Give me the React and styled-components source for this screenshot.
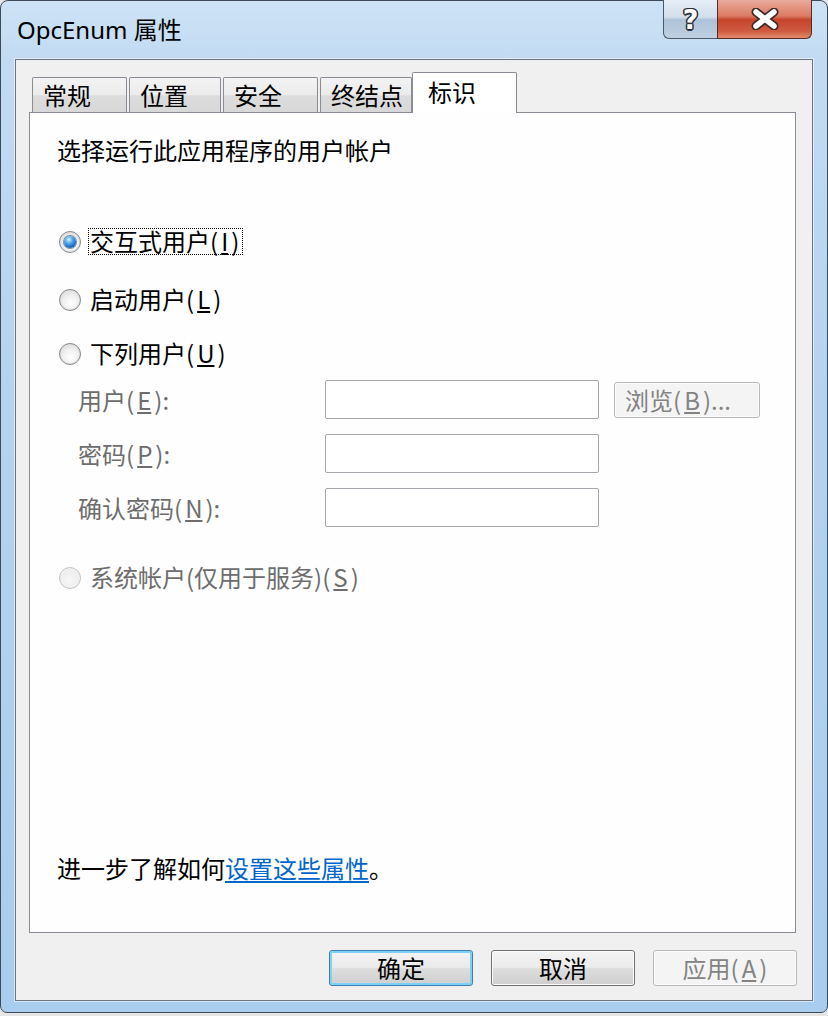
import React from 'react';
import styled, { createGlobalStyle } from 'styled-components';

const cjk = `"Noto Sans CJK SC", "Noto Sans", sans-serif`;

const Global = createGlobalStyle`
  html, body {
    margin: 0;
    padding: 0;
    background: #e6e6e6;
  }
  #root {
    width: 828px;
    height: 1016px;
  }
  * { box-sizing: border-box; }
`;

const Window = styled.div`
  width: 828px;
  height: 1013px;
  display: flex;
  flex-direction: column;
  padding: 0 14px 11px 14px;
  border: 1px solid #3d4a57;
  border-radius: 8px 8px 7px 7px;
  background: linear-gradient(180deg, #cde2f5 0px, #c2dbf2 60px, #b4d3ef 400px, #a9cdee 100%);
  font-family: ${cjk};
`;

const TitleBar = styled.div`
  height: 58px;
  display: flex;
  align-items: flex-start;
  justify-content: space-between;
  flex-shrink: 0;
`;

const Title = styled.div`
  margin: 14px 0 0 2px;
  font-family: "Noto Sans", "Noto Sans CJK SC", sans-serif;
  font-size: 24px;
  line-height: 30px;
  color: #000;
`;

const Caption = styled.div`
  display: flex;
  margin-right: 1px;
  margin-top: -1px;
`;

const HelpBtn = styled.div`
  width: 54px;
  height: 39px;
  border: 1px solid #4a5868;
  border-top: none;
  border-right: none;
  border-radius: 0 0 0 6px;
  background: linear-gradient(180deg, #e6eef7 0%, #d2dfec 45%, #aec2d7 52%, #bfd0e2 100%);
  display: flex;
  align-items: center;
  justify-content: center;
  color: #fff;
  font-family: "DejaVu Sans", sans-serif;
  font-weight: bold;
  font-size: 27px;
  text-shadow: -1.5px 0 #2c3138, 1.5px 0 #2c3138, 0 -1.5px #2c3138, 0 1.5px #2c3138,
    -1px -1px #2c3138, 1px 1px #2c3138, -1px 1px #2c3138, 1px -1px #2c3138;
`;

const CloseBtn = styled.div`
  width: 95px;
  height: 39px;
  border: 1px solid #5b2a22;
  border-top: none;
  border-radius: 0 0 6px 0;
  background: linear-gradient(180deg, #eaab9c 0%, #dc7b63 42%, #c5442b 52%, #cf5b40 82%, #e38b6d 100%);
  display: flex;
  align-items: center;
  justify-content: center;
`;

const Client = styled.div`
  flex: 1;
  display: flex;
  flex-direction: column;
  border: 1px solid #6b7480;
  background: #f0f0f0;
  padding: 12px 16px 14px 13px;
  box-shadow: 0 0 0 1px rgba(255, 255, 255, 0.55);
`;

const TabStrip = styled.div`
  display: flex;
  align-items: flex-end;
  gap: 2px;
  padding-left: 3px;
  height: 40px;
  flex-shrink: 0;
`;

const Tab = styled.div`
  width: ${p => p.w}px;
  height: ${p => (p.active ? 41 : 35)}px;
  margin-bottom: ${p => (p.active ? -1 : 0)}px;
  margin-left: ${p => (p.active ? -2 : 0)}px;
  position: relative;
  z-index: ${p => (p.active ? 1 : 0)};
  border: 1px solid #898c95;
  border-bottom: none;
  border-radius: 2px 2px 0 0;
  background: ${p => (p.active ? '#fff' : 'linear-gradient(180deg, #f3f3f3 0%, #ebebeb 50%, #dcdcdc 52%, #d8d8d8 100%)')};
  padding-left: ${p => (p.active ? 15 : 10)}px;
  font-size: 24px;
  line-height: ${p => (p.active ? 38 : 34)}px;
  color: #000;
  white-space: nowrap;
`;

const Panel = styled.div`
  flex: 1;
  display: flex;
  flex-direction: column;
  background: #fefefe;
  border: 1px solid #898c95;
  padding: 0 0 49px 27px;
`;

const Text = styled.div`
  font-size: 24px;
  line-height: 30px;
  color: ${p => (p.disabled ? '#6d6d6d' : '#000')};
  margin-top: ${p => p.top || 0}px;
  white-space: nowrap;
`;

const RadioRow = styled.div`
  display: flex;
  align-items: center;
  gap: 7px;
  height: 30px;
  margin-top: ${p => p.top}px;
  margin-left: 2px;
`;

const RadioCircle = styled.span`
  width: 22px;
  height: 22px;
  margin-top: 2px;
  border-radius: 50%;
  border: 1px solid ${p => (p.disabled ? '#c2c4c6' : '#85888c')};
  background: ${p => (p.disabled ? 'radial-gradient(circle at 50% 60%, #f6f6f6 0%, #e9e9e9 100%)' : 'radial-gradient(circle at 55% 65%, #ffffff 0%, #f0f0f0 45%, #cfcfcf 100%)')};
  box-shadow: inset 0 0 0 1px ${p => (p.disabled ? '#f2f2f2' : '#e2e2e2')};
  display: flex;
  align-items: center;
  justify-content: center;
  flex-shrink: 0;
  &::after {
    content: '';
    display: ${p => (p.checked ? 'block' : 'none')};
    width: 12px;
    height: 12px;
    border-radius: 50%;
    background: radial-gradient(circle at 40% 30%, #d8f0ff 0%, #5fb4f3 30%, #1b6ec4 65%, #0b3f86 100%);
    box-shadow: 0 0 0 1px rgba(20, 60, 110, 0.55);
  }
`;

const RadioLabel = styled.span`
  font-size: 24px;
  line-height: 24px;
  padding: 0 3px 1px 1px;
  border: 1px dotted ${p => (p.focused ? '#000' : 'transparent')};
  color: ${p => (p.disabled ? '#6d6d6d' : '#000')};
  white-space: nowrap;
`;

const Key = styled.span`
  padding: 0 3px;
  text-decoration: underline;
  text-underline-offset: 2px;
`;

const FieldGrid = styled.div`
  display: grid;
  grid-template-columns: 232px 274px 146px;
  grid-auto-rows: 39px;
  column-gap: 15px;
  row-gap: 15px;
  align-items: center;
  margin: 12px 0 0 21px;
`;

const Input = styled.div`
  height: 39px;
  border: 1px solid #a3a6ab;
  border-radius: 2px;
  background: #fff;
`;

const Button = styled.div`
  width: ${p => p.w || 144}px;
  height: 36px;
  display: flex;
  align-items: center;
  justify-content: ${p => (p.left ? 'flex-start' : 'center')};
  padding-left: ${p => (p.left ? 10 : 0)}px;
  font-size: 24px;
  line-height: 30px;
  border-radius: 3px;
  white-space: nowrap;
  border: 1px solid ${p => (p.disabled ? '#b5b9bd' : p.primary ? '#3c7fb1' : '#707070')};
  color: ${p => (p.disabled ? '#838383' : '#000')};
  background: ${p => (p.disabled ? '#f4f4f4' : 'linear-gradient(180deg, #f3f3f3 0%, #ebebeb 48%, #dddddd 52%, #cfcfcf 100%)')};
  box-shadow: ${p => (p.primary ? 'inset 0 0 0 2px #7fd0f5' : 'inset 0 0 0 1px #fcfcfc')};
`;

const Footer = styled.div`
  margin-top: auto;
  font-size: 24px;
  line-height: 30px;
  color: #000;
  white-space: nowrap;
`;

const Link = styled.span`
  color: #0066cc;
  text-decoration: underline;
  text-underline-offset: 3px;
`;

const ButtonRow = styled.div`
  display: flex;
  justify-content: flex-end;
  gap: 18px;
  margin-top: 17px;
  margin-right: -1px;
`;

const tabs = [
  { label: '常规', w: 95 },
  { label: '位置', w: 92 },
  { label: '安全', w: 95 },
  { label: '终结点', w: 92 },
  { label: '标识', w: 105, active: true },
];

function CloseIcon() {
  return (
    <svg width="30" height="22" viewBox="0 0 30 22">
      <path d="M6 4 L24 18 M24 4 L6 18" stroke="#3a2a26" strokeWidth="9" strokeLinecap="round" />
      <path d="M6 4 L24 18 M24 4 L6 18" stroke="#fff" strokeWidth="5.5" strokeLinecap="round" />
    </svg>
  );
}

function Radio({ top, checked, focused, disabled, children }) {
  return (
    <RadioRow top={top}>
      <RadioCircle checked={checked} disabled={disabled} />
      <RadioLabel focused={focused} disabled={disabled}>{children}</RadioLabel>
    </RadioRow>
  );
}

export default function App() {
  return (
    <>
      <Global />
      <Window>
        <TitleBar>
          <Title>OpcEnum 属性</Title>
          <Caption>
            <HelpBtn>?</HelpBtn>
            <CloseBtn><CloseIcon /></CloseBtn>
          </Caption>
        </TitleBar>
        <Client>
          <TabStrip>
            {tabs.map(t => (
              <Tab key={t.label} w={t.w} active={t.active}>{t.label}</Tab>
            ))}
          </TabStrip>
          <Panel>
            <Text top={22}>选择运行此应用程序的用户帐户</Text>
            <Radio top={61} checked focused>交互式用户(<Key>I</Key>)</Radio>
            <Radio top={28}>启动用户(<Key>L</Key>)</Radio>
            <Radio top={24}>下列用户(<Key>U</Key>)</Radio>
            <FieldGrid>
              <Text disabled>用户(<Key>E</Key>):</Text>
              <Input />
              <Button w={146} left disabled>浏览(<Key>B</Key>)...</Button>
              <Text disabled>密码(<Key>P</Key>):</Text>
              <Input />
              <span />
              <Text disabled>确认密码(<Key>N</Key>):</Text>
              <Input />
              <span />
            </FieldGrid>
            <Radio top={35} disabled>系统帐户(仅用于服务)(<Key>S</Key>)</Radio>
            <Footer>进一步了解如何<Link>设置这些属性</Link>。</Footer>
          </Panel>
          <ButtonRow>
            <Button primary>确定</Button>
            <Button>取消</Button>
            <Button disabled>应用(<Key>A</Key>)</Button>
          </ButtonRow>
        </Client>
      </Window>
    </>
  );
}
